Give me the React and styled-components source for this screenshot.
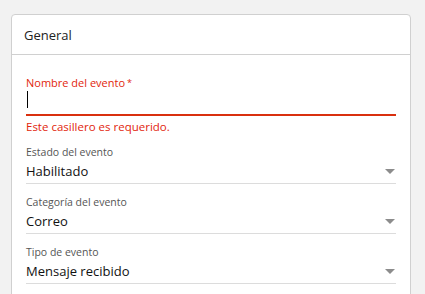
import styled, { createGlobalStyle } from 'styled-components';

const GlobalStyle = createGlobalStyle`
  html, body {
    margin: 0;
    padding: 0;
    background: #f2f2f2;
    font-family: "Open Sans", "Noto Sans", sans-serif;
  }
`;

const Page = styled.div`
  padding: 14px 14px 0 11px;
  height: 294px;
  box-sizing: border-box;
  overflow: hidden;
`;

const Card = styled.div`
  background: #fff;
  border: 1px solid #d0d0d0;
  border-radius: 4px 4px 0 0;
  width: 400px;
  box-sizing: border-box;
  height: 300px;
`;

const CardHeader = styled.div`
  height: 40px;
  box-sizing: border-box;
  border-bottom: 1px solid #d0d0d0;
  padding-left: 12px;
  display: flex;
  align-items: center;
  font-size: 13px;
  color: #222;
`;

const CardBody = styled.div`
  padding: 21px 14px 0 14px;
  display: flex;
  flex-direction: column;
`;

const Field = styled.div`
  display: flex;
  flex-direction: column;
  margin-bottom: ${p => p.$gap || 0}px;
`;

const Label = styled.label`
  font-size: ${p => (p.$error ? 11 : 10.5)}px;
  line-height: 14px;
  color: ${p => (p.$error ? '#e2250c' : '#555')};
`;

const Required = styled.span`
  margin-left: 2px;
  font-size: 9px;
  vertical-align: top;
`;

const InputLine = styled.div`
  height: 24px;
  display: flex;
  align-items: flex-start;
  border-bottom: 2px solid #d9300f;
`;

const Caret = styled.span`
  width: 1px;
  height: 17px;
  background: #000;
  margin: 1px 0 0 1px;
`;

const ErrorText = styled.div`
  font-size: 11.5px;
  line-height: 16px;
  margin-top: 3px;
  color: #e2250c;
`;

const SelectRow = styled.div`
  height: 24px;
  display: flex;
  align-items: center;
  justify-content: space-between;
  border-bottom: 1px solid #dcdcdc;
  font-size: 13px;
  color: #111;
`;

const Arrow = styled.span`
  width: 0;
  height: 0;
  border-left: 5.5px solid transparent;
  border-right: 5.5px solid transparent;
  border-top: 5px solid #8c8c8c;
  margin-right: 1px;
`;

const selects = [
  { label: 'Estado del evento', value: 'Habilitado' },
  { label: 'Categoría del evento', value: 'Correo' },
  { label: 'Tipo de evento', value: 'Mensaje recibido' },
];

export default function App() {
  return (
    <>
      <GlobalStyle />
      <Page>
        <Card>
          <CardHeader>General</CardHeader>
          <CardBody>
            <Field $gap={10}>
              <Label $error>
                Nombre del evento<Required>*</Required>
              </Label>
              <InputLine>
                <Caret />
              </InputLine>
              <ErrorText>Este casillero es requerido.</ErrorText>
            </Field>
            {selects.map(s => (
              <Field key={s.label} $gap={11}>
                <Label>{s.label}</Label>
                <SelectRow>
                  {s.value}
                  <Arrow />
                </SelectRow>
              </Field>
            ))}
          </CardBody>
        </Card>
      </Page>
    </>
  );
}
